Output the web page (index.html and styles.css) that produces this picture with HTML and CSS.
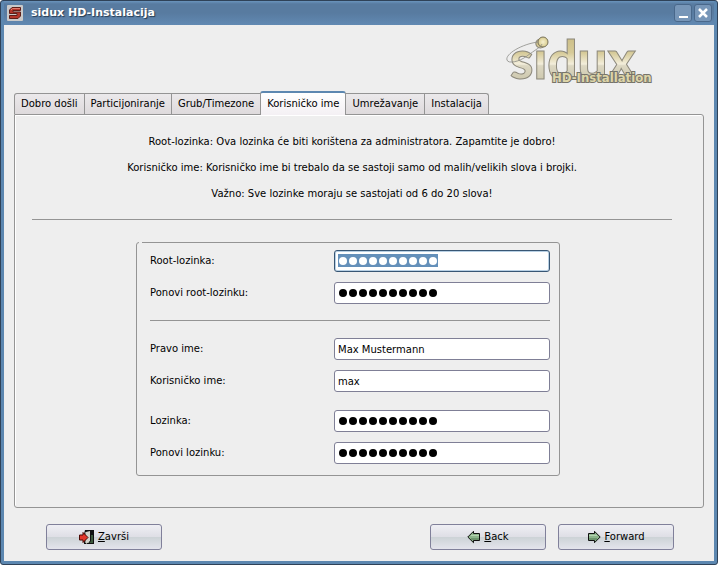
FILE: index.html
```html
<!DOCTYPE html>
<html lang="hr">
<head>
<meta charset="utf-8">
<title>sidux HD-Instalacija</title>
<link rel="stylesheet" href="styles.css">
</head>
<body>
<div class="window">
  <header class="titlebar">
    <svg class="app-icon" width="16" height="16" viewBox="0 0 16 16" aria-hidden="true">
      <rect width="16" height="16" rx="1" fill="#c9c9c9"/>
      <path d="M13.500 2.500H5L2.500 5v3.500h7.500V10.500h-7.500v3H11l2.500-2.500V7h-7.500V5.500h7.500z" fill="#b5372b" stroke="#5e1f18" stroke-width="1"/>
      <path d="M4 5l1.500-1.500H13" stroke="#e27a6c" fill="none"/>
    </svg>
    <h1 class="title">sidux HD-Instalacija</h1>
    <button class="win-button" type="button" aria-label="Minimize"><svg width="16" height="16" viewBox="0 0 16 16"><path d="M4 12h9" stroke="#fff" stroke-width="2"/></svg></button>
    <button class="win-button" type="button" aria-label="Close"><svg width="16" height="16" viewBox="0 0 16 16"><path d="M4 4l8 8M12 4l-8 8" stroke="#fff" stroke-width="2.500"/></svg></button>
  </header>
  <main class="content">
    <div class="brand">
      <svg width="150" height="58" viewBox="0 0 150 58" role="img" aria-label="sidux HD-Installation">
        <defs>
          <linearGradient id="gold" gradientUnits="userSpaceOnUse" x1="0" y1="8" x2="0" y2="50">
            <stop offset="0" stop-color="#cdbf88"/><stop offset=".35" stop-color="#d6ca98"/><stop offset=".62" stop-color="#f3eedb"/><stop offset=".66" stop-color="#dcd7c2"/><stop offset="1" stop-color="#cdc8ae"/>
          </linearGradient>
          <radialGradient id="ball"><stop offset="0" stop-color="#f6f0cf"/><stop offset="1" stop-color="#d8cb8c"/></radialGradient>
        </defs>
        <text class="logo-name" x="6" y="49" fill="url(#gold)">sidux</text>
        <circle cx="39" cy="12" r="5" fill="url(#ball)" stroke="#77715a"/>
        <path d="M34 12C18 14 1 24 3 30c1 4 12 2 20-4S37 17 38 14" fill="none" stroke="#8b8b86" stroke-width=".8"/>
        <text class="logo-sub" x="48" y="52">HD-Installation</text>
      </svg>
    </div>
    <nav class="tabs" role="tablist">
      <button class="tab" role="tab" type="button">Dobro došli</button>
      <button class="tab" role="tab" type="button">Particijoniranje</button>
      <button class="tab" role="tab" type="button">Grub/Timezone</button>
      <button class="tab active" role="tab" type="button" aria-selected="true">Korisničko ime</button>
      <button class="tab" role="tab" type="button">Umrežavanje</button>
      <button class="tab" role="tab" type="button">Instalacija</button>
    </nav>
    <section class="panel">
      <div class="notes">
        <p>Root-lozinka: Ova lozinka će biti korištena za administratora. Zapamtite je dobro!</p>
        <p>Korisničko ime: Korisničko ime bi trebalo da se sastoji samo od malih/velikih slova i brojki.</p>
        <p>Važno: Sve lozinke moraju se sastojati od 6 do 20 slova!</p>
      </div>
      <hr class="rule">
      <div class="form-area">
      <form class="group">
        <div class="row"><label for="root">Root-lozinka:</label><div class="field selected"><input id="root" type="password"><span class="dots" aria-hidden="true"><i></i><i></i><i></i><i></i><i></i><i></i><i></i><i></i><i></i><i></i></span></div></div>
        <div class="row"><label for="root2">Ponovi root-lozinku:</label><div class="field"><input id="root2" type="password"><span class="dots" aria-hidden="true"><i></i><i></i><i></i><i></i><i></i><i></i><i></i><i></i><i></i><i></i></span></div></div>
        <hr class="rule">
        <div class="row"><label for="name">Pravo ime:</label><div class="field"><input id="name" type="text" value="Max Mustermann"></div></div>
        <div class="row"><label for="user">Korisničko ime:</label><div class="field"><input id="user" type="text" value="max"></div></div>
        <div class="row spaced"><label for="pass">Lozinka:</label><div class="field"><input id="pass" type="password"><span class="dots" aria-hidden="true"><i></i><i></i><i></i><i></i><i></i><i></i><i></i><i></i><i></i><i></i></span></div></div>
        <div class="row"><label for="pass2">Ponovi lozinku:</label><div class="field"><input id="pass2" type="password"><span class="dots" aria-hidden="true"><i></i><i></i><i></i><i></i><i></i><i></i><i></i><i></i><i></i><i></i></span></div></div>
      </form>
      </div>
    </section>
    <footer class="actions">
      <button class="action quit" type="button">
        <svg width="16" height="16" viewBox="0 0 16 16" aria-hidden="true"><path d="M6 1h9v14H5V5z" fill="#111"/><path d="M6 3h4v11H6z" fill="#888f88"/><path d="M7 3l4-1v10l-4 3z" fill="#d2d4cc"/><path d="M12 6h2v8h-4l2-2z" fill="#3d5a3d"/><path d="M.5 6H4V3.500L9 8.500 4 13.500V11H.5z" fill="#e2372b" stroke="#4b0905"/></svg>
        <span><u>Z</u>avrši</span>
      </button>
      <button class="action" type="button">
        <svg width="14" height="14" viewBox="0 0 14 14" aria-hidden="true"><path d="M.8 7L6.500 1.300V3.500h6v7H6.500v2.200z" fill="#8cb58b" stroke="#111"/><path d="M4 9h8" stroke="#4d734e"/><path d="M4 5.500h8" stroke="#b5d2b2"/></svg>
        <span><u>B</u>ack</span>
      </button>
      <button class="action" type="button">
        <svg width="14" height="14" viewBox="0 0 14 14" aria-hidden="true"><path d="M13.200 7L7.500 1.300V3.500h-6v7h6v2.200z" fill="#8cb58b" stroke="#111"/><path d="M2 9h8" stroke="#4d734e"/><path d="M2 5.500h8" stroke="#b5d2b2"/></svg>
        <span><u>F</u>orward</span>
      </button>
    </footer>
  </main>
</div>
</body>
</html>
```
FILE: styles.css
```css
* { box-sizing: border-box; }
body {
  margin: 0;
  background: #fff;
  color: #000;
  font: 10px/14px "DejaVu Sans", sans-serif;
}
button, input { font: inherit; color: inherit; }
.window {
  display: flex;
  flex-direction: column;
  min-height: 100vh;
  padding: 0 3px 3px;
  background: #5c87b0;
  border: 1px solid #2f4258;
  border-radius: 3px;
}
.titlebar {
  display: flex;
  align-items: center;
  gap: 4px;
  height: 24px;
  padding: 0 2px 0 3px;
  background: linear-gradient(#6a94bd 0, #587ba0 3px, #587ba0 50%, #6189b2);
}
.title {
  flex: 1;
  margin: 0 0 0 4px;
  color: #fff;
  font-size: 11px;
  font-weight: bold;
  text-shadow: 1px 1px 1px #263b52;
}
.win-button {
  display: flex;
  align-items: center;
  justify-content: center;
  width: 18px;
  height: 18px;
  margin-right: -2px;
  padding: 0;
  background: #7796b8;
  border: 1px solid #49688b;
  border-radius: 3px;
}
.win-button:last-child { margin: 0; }
.content {
  flex: 1;
  padding: 5px 10px 11px;
  background: #eee;
}
.brand {
  display: flex;
  justify-content: flex-end;
  height: 61px;
  padding-right: 50px;
}
.logo-name {
  font: 900 53px Lato, sans-serif;
  stroke: #8d897c;
  stroke-width: 1px;
}
.logo-sub {
  font: bold 13px "DejaVu Sans Condensed", "DejaVu Sans", sans-serif;
  fill: #ddd5a8;
  stroke: #77746a;
  stroke-width: 2px;
  paint-order: stroke;
}
.tabs { display: flex; align-items: flex-end; }
.tab {
  height: 21px;
  margin-left: -1px;
  padding: 0 6px;
  background: linear-gradient(#ebe9eb, #dedadc);
  border: 1px solid #949494;
  border-bottom: 0;
  white-space: nowrap;
}
.tab:first-child { margin-left: 0; border-radius: 3px 0 0; }
.tab:last-child { border-radius: 0 3px 0 0; }
.tab.active {
  position: relative;
  height: 24px;
  margin-bottom: -1px;
  background: linear-gradient(#fff, #f4f0f4);
  border-top: 2px solid #5c87b0;
  border-radius: 3px 3px 0 0;
}
.panel {
  padding: 20px 31px 31px 17px;
  border: 1px solid #949494;
  border-radius: 0 3px 3px 3px;
  box-shadow: inset 1px 1px #fff;
}
.notes { display: grid; gap: 12px; text-align: center; }
.notes p { margin: 0; }
.rule {
  height: 1px;
  margin: 18px 0 22px;
  background: #949494;
  border: 0;
}
.form-area { padding-right: 8px; }
.group {
  position: relative;
  width: 424px;
  max-width: 100%;
  margin: 0 auto;
  padding: 7px 9px 11px 13px;
  border: 1px solid #949494;
  border-radius: 3px;
}
.group::before {
  content: "";
  position: absolute;
  top: -1px;
  left: 2px;
  width: 3px;
  height: 1px;
  background: #eee;
}
.group .rule { margin: 16px 0 17px; }
.row {
  display: grid;
  grid-template-columns: 184px 1fr;
  align-items: center;
  margin-bottom: 10px;
}
.row:last-child, .row:has(+ .rule) { margin-bottom: 0; }
.row.spaced { margin-top: 18px; }
.field { position: relative; }
.field input {
  display: block;
  width: 100%;
  height: 22px;
  padding: 0 3px;
  background: #fff;
  border: 1px solid #7f7f96;
  border-radius: 3px;
  outline: 0;
}
.field.selected input { border-color: #385674; box-shadow: inset 0 0 0 1px #b8d0e4; }
.dots {
  position: absolute;
  top: 4px;
  left: 4px;
  display: flex;
  gap: 2px;
  padding: 3px 1px 2px;
}
.dots i { width: 8px; height: 8px; background: #000; border-radius: 50%; }
.selected .dots { background: #6490ba; }
.selected .dots i { background: #fff; }
.actions {
  display: flex;
  gap: 12px;
  padding: 16px 30px 0 32px;
}
.action {
  display: flex;
  align-items: center;
  justify-content: center;
  gap: 3px;
  width: 116px;
  height: 26px;
  padding: 0;
  background: linear-gradient(#efeff4, #dfdfe6 48%, #ccd2d6 50%, #e4e4ec);
  border: 1px solid #80809a;
  border-radius: 3px;
}
.quit { margin-right: auto; }
```
